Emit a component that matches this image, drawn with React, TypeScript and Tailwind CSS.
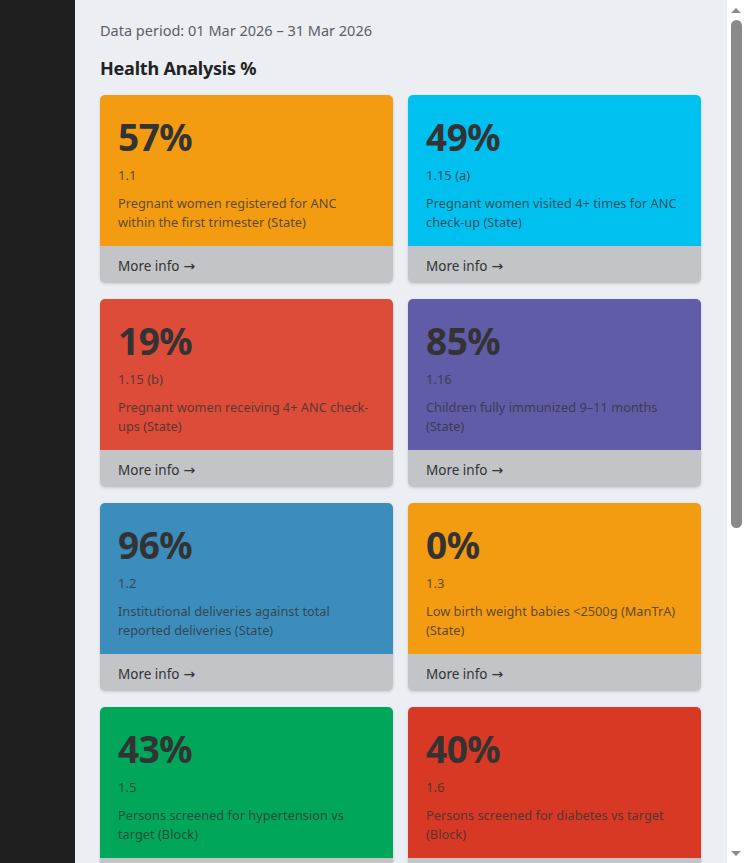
import React from "react";

type Card = { value: string; code: string; label: string; bg: string };

const cards: Card[] = [
  { value: "57%", code: "1.1", label: "Pregnant women registered for ANC within the first trimester (State)", bg: "bg-[#f39c12]" },
  { value: "49%", code: "1.15 (a)", label: "Pregnant women visited 4+ times for ANC check-up (State)", bg: "bg-[#00c0ef]" },
  { value: "19%", code: "1.15 (b)", label: "Pregnant women receiving 4+ ANC check-ups (State)", bg: "bg-[#dd4b39]" },
  { value: "85%", code: "1.16", label: "Children fully immunized 9–11 months (State)", bg: "bg-[#605ca8]" },
  { value: "96%", code: "1.2", label: "Institutional deliveries against total reported deliveries (State)", bg: "bg-[#3c8dbc]" },
  { value: "0%", code: "1.3", label: "Low birth weight babies <2500g (ManTrA) (State)", bg: "bg-[#f39c12]" },
  { value: "43%", code: "1.5", label: "Persons screened for hypertension vs target (Block)", bg: "bg-[#00a65a]" },
  { value: "40%", code: "1.6", label: "Persons screened for diabetes vs target (Block)", bg: "bg-[#d73925]" },
];

function StatCard({ c }: { c: Card }) {
  return (
    <div className="rounded-[5px] overflow-hidden shadow-[0_1px_3px_rgba(0,0,0,0.15)] flex flex-col">
      <div className={`${c.bg} px-[18px] pt-[21px] h-[151px]`}>
        <div className="text-[37px] leading-[42px] font-bold text-[#333] tracking-[-0.5px]">{c.value}</div>
        <div className="mt-[7px] text-[13px] leading-[20px] text-[#333]/80">{c.code}</div>
        <div className="mt-[9px] text-[12.8px] leading-[19px] text-[#333]/80" style={{ hyphens: "manual" }}>
          {c.label}
        </div>
      </div>
      <div className="bg-[#c2c4c8] h-[37px] px-[18px] pt-[3px] flex items-center text-[13.5px] text-[#333]">
        More info <span className="ml-[4px] text-[14px]" style={{ fontFamily: '"DejaVu Sans", sans-serif' }}>→</span>
      </div>
    </div>
  );
}

export default function App() {
  return (
    <div className="flex w-[745px] h-[863px] overflow-hidden" style={{ fontFamily: '"Noto Sans", "Open Sans", sans-serif' }}>
      <div className="w-[75px] shrink-0 bg-[#1e1e1e]" />
      <div className="flex-1 bg-[#ebeef3] pl-[25px] pr-[26px] pt-[20px] overflow-hidden">
        <div className="text-[14.5px] leading-[20px] text-[#5c6066]">Data period: 01 Mar 2026 – 31 Mar 2026</div>
        <div className="mt-[16px] text-[18px] leading-[24px] font-bold text-[#222] tracking-[-0.2px]">Health Analysis %</div>
        <div className="mt-[15px] grid grid-cols-2 gap-x-[15px] gap-y-[16px]">
          {cards.map((c) => (
            <StatCard key={c.value + c.code} c={c} />
          ))}
        </div>
      </div>
      <div className="w-[18px] shrink-0 bg-white flex flex-col items-center">
        <div className="h-[20px] flex items-center justify-center">
          <div className="w-0 h-0 border-l-[5px] border-r-[5px] border-b-[5px] border-l-transparent border-r-transparent border-b-[#8a8a8a]" />
        </div>
        <div className="w-[11px] h-[508px] rounded-full bg-[#8a8a8a]" />
        <div className="flex-1" />
        <div className="h-[20px] flex items-center justify-center">
          <div className="w-0 h-0 border-l-[5px] border-r-[5px] border-t-[5px] border-l-transparent border-r-transparent border-t-[#8a8a8a]" />
        </div>
      </div>
    </div>
  );
}
